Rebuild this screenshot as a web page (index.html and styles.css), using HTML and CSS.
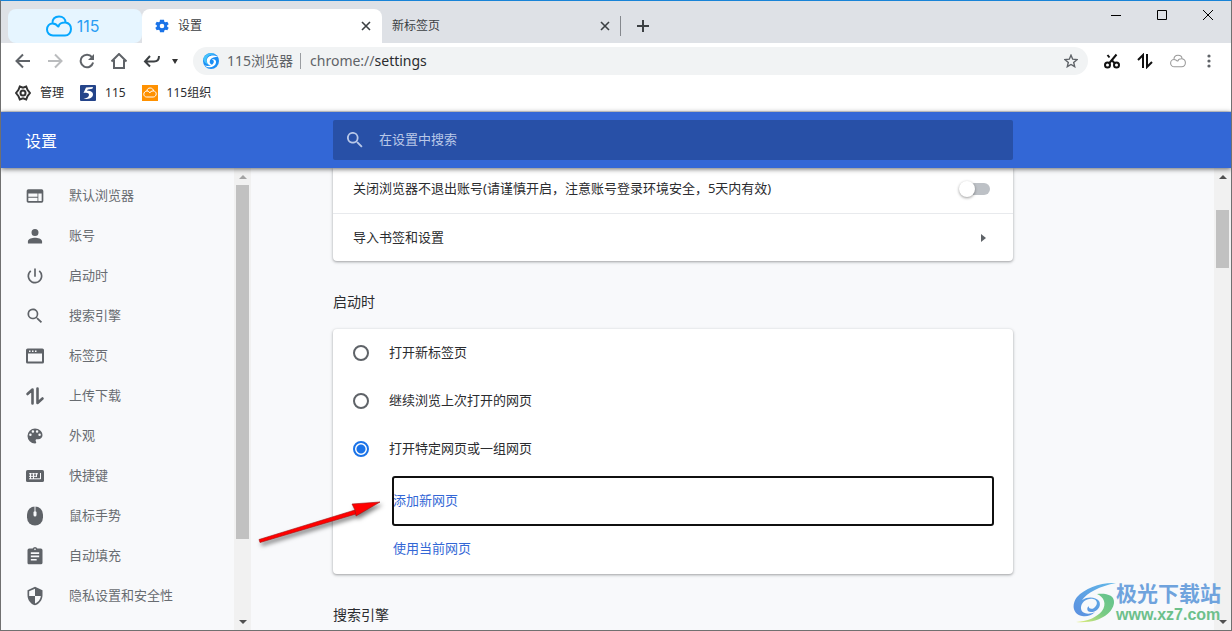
FILE: index.html
```html
<!DOCTYPE html>
<html lang="zh-CN">
<head>
<meta charset="utf-8">
<title>设置</title>
<link rel="stylesheet" href="styles.css">
</head>
<body>
<div class="window">
  <header class="tabstrip">
    <button class="home-tab" type="button">
      <svg width="26" height="22" viewBox="0 0 26 22" fill="none" stroke="#06a7ff" stroke-width="2" stroke-linecap="round"><path d="M6.500 8.500C6 4 9 1.500 13 1.500c4 0 6.500 2.500 6.500 6 3 .5 5.500 2.700 5.500 6.500 0 3.500-2.500 6.500-6 6.500H7c-3.500 0-6-2.800-6-6C1 11 3.500 8.500 6.500 8.500c2.500 0 4.500 1.500 5.500 3M12.500 11.500c.5-2.500 3.500-4.200 7-4"/></svg>
      <span>115</span>
    </button>
    <div class="tab tab-active">
      <svg width="14" height="14" viewBox="2 2 20 20" fill="#1a73e8"><path d="M19.400 13a7.500 7.500 0 0 0 0-2l2.200-1.600-2-3.600-2.600 1a7.500 7.500 0 0 0-1.700-1L14.900 3H9.100l-.4 2.800a7.500 7.500 0 0 0-1.700 1l-2.600-1-2 3.600L4.600 11a7.500 7.500 0 0 0 0 2l-2.200 1.600 2 3.600 2.600-1a7.500 7.500 0 0 0 1.700 1l.4 2.800h5.800l.4-2.800a7.500 7.500 0 0 0 1.700-1l2.600 1 2-3.600zM12 15.300a3.300 3.300 0 1 1 0-6.600 3.300 3.300 0 0 1 0 6.600z"/></svg>
      <button class="tab-title" type="button">设置</button>
      <button class="icon-btn" type="button" aria-label="关闭标签"><svg width="10" height="10" viewBox="0 0 10 10" stroke="#3c4043" stroke-width="1.600"><path d="M1 1l8 8M9 1L1 9"/></svg></button>
    </div>
    <div class="tab">
      <button class="tab-title" type="button">新标签页</button>
      <button class="icon-btn" type="button" aria-label="关闭标签"><svg width="10" height="10" viewBox="0 0 10 10" stroke="#3c4043" stroke-width="1.600"><path d="M1 1l8 8M9 1L1 9"/></svg></button>
    </div>
    <button class="icon-btn new-tab" type="button" aria-label="新建标签"><svg width="12" height="12" viewBox="0 0 12 12" stroke="#3c4043" stroke-width="2"><path d="M6 0v12M0 6h12"/></svg></button>
    <div class="window-controls">
      <button class="icon-btn" type="button" aria-label="最小化"><svg width="12" height="12" viewBox="0 0 12 12" stroke="#000"><path d="M1 6.500h10"/></svg></button>
      <button class="icon-btn" type="button" aria-label="最大化"><svg width="12" height="12" viewBox="0 0 12 12" fill="none" stroke="#000"><path d="M1.500 1.500h9v9h-9z"/></svg></button>
      <button class="icon-btn" type="button" aria-label="关闭"><svg width="12" height="12" viewBox="0 0 12 12" stroke="#000"><path d="M1 1l10 10M11 1L1 11"/></svg></button>
    </div>
  </header>

  <nav class="toolbar">
    <button class="icon-btn" type="button" aria-label="后退"><svg width="16" height="16" viewBox="0 0 16 16" fill="none" stroke="#5f6368" stroke-width="2"><path d="M15 8H2.500M8 1.500L1.500 8 8 14.500"/></svg></button>
    <button class="icon-btn" type="button" aria-label="前进"><svg width="16" height="16" viewBox="0 0 16 16" fill="none" stroke="#babcbe" stroke-width="2"><path d="M1 8h12.500M8 1.500L14.500 8 8 14.500"/></svg></button>
    <button class="icon-btn" type="button" aria-label="刷新"><svg width="16" height="16" viewBox="0 0 16 16"><path d="M13 4.200A6.300 6.300 0 1 0 14.100 9.500" fill="none" stroke="#5f6368" stroke-width="2"/><path d="M15 1v6H9z" fill="#5f6368"/></svg></button>
    <button class="icon-btn" type="button" aria-label="主页"><svg width="16" height="16" viewBox="1 1 16 16" fill="none" stroke="#5f6368" stroke-width="2"><path d="M1.500 9.500L9 2l7.500 7.500M4 8v8h10V8"/></svg></button>
    <button class="icon-btn" type="button" aria-label="恢复"><svg width="18" height="14" viewBox="0 0 18 14" fill="none" stroke="#3c4043" stroke-width="2"><path d="M7 2L2 7.500l5 5M2.500 7.500H11c3.500 0 5-2 5-5.500"/></svg></button>
    <button class="icon-btn caret" type="button" aria-label="更多恢复"><svg width="6" height="5" viewBox="0 0 6 5"><path d="M0 0h6L3 5z" fill="#333"/></svg></button>
    <div class="omnibox">
      <svg width="16" height="16" viewBox="0 0 16 16"><circle cx="8" cy="8" r="8" fill="#1c8ff5"/><path d="M.3 6C2 1 8-1.500 13 2 9 .8 4.500 2 3.500 6c-.8 3.500 2.500 6.500 6 5.500C6 12.500 1 10.500.3 6z" fill="#46c3fa"/><path d="M14.800 4C10 .8 3.500 3 3.800 8c.2 3.500 3.500 5 6 4-2.300-.5-3.500-2-3-4C7.500 5.200 11 3.800 14.800 4zM1.500 12.500c4 3.300 10.500 2 11.500-2.700.5-2.800-1.800-4.200-4.200-3.300 1.700.3 2.400 1.500 1.900 3-1 3-5 4-9.200 3z" fill="#fff"/></svg>
      <span class="omni-name">115浏览器</span>
      <label class="omni-scheme" for="url">chrome://</label>
      <input id="url" class="omni-input" type="text" value="settings">
      <button class="icon-btn" type="button" aria-label="收藏"><svg width="14" height="14" viewBox="0 0 14 14" fill="none" stroke="#5f6368" stroke-width="1.400"><path d="M7 1.200l1.700 4 4.300.4-3.300 2.800 1 4.300L7 10.500l-3.700 2.200 1-4.300L1 5.600l4.300-.4z"/></svg></button>
    </div>
    <div class="tools">
      <button class="icon-btn" type="button" aria-label="截图"><svg width="16" height="16" viewBox="0 0 16 16" fill="none" stroke="#111" stroke-width="2"><circle cx="3.500" cy="12" r="2.500"/><circle cx="12.500" cy="12" r="2.500"/><path d="M5 10.500L12.500 1.500M11 10.500L7.800 7.300M5.500 4.500L3.500 2"/></svg></button>
      <button class="icon-btn" type="button" aria-label="上传下载"><svg width="16" height="16" viewBox="0 0 16 16" fill="none" stroke="#111" stroke-width="2"><path d="M6 15V2L1 7M10 1v13l5-5"/></svg></button>
      <button class="icon-btn" type="button" aria-label="云"><svg width="16" height="14" viewBox="0 0 26 22" fill="none" stroke="#999" stroke-width="1.700"><path d="M6.500 8.500C6 4 9 1.500 13 1.500c4 0 6.500 2.500 6.500 6 3 .5 5.500 2.700 5.500 6.500 0 3.500-2.500 6.500-6 6.500H7c-3.500 0-6-2.800-6-6C1 11 3.500 8.500 6.500 8.500c2.500 0 4.500 1.500 5.500 3M12.500 11.500c.5-2.500 3.500-4.200 7-4"/></svg></button>
      <button class="icon-btn menu" type="button" aria-label="菜单"><svg width="4" height="14" viewBox="0 0 4 14" fill="#5f6368"><circle cx="2" cy="2" r="1.600"/><circle cx="2" cy="7" r="1.600"/><circle cx="2" cy="12" r="1.600"/></svg></button>
    </div>
  </nav>

  <nav class="bookmarks">
    <a href="#manage"><svg width="16" height="16" viewBox="0 0 16 16" fill="none" stroke="#333" stroke-width="2"><path d="M4.800 1.500L8 2.700l3.200-1.200L12.500 4.800 15 8l-2.500 3.200-1.300 3.300L8 13.300l-3.200 1.200-1.300-3.300L1 8l2.500-3.200z"/><circle cx="8" cy="8" r="2.500"/></svg>管理</a>
    <a href="#115"><svg width="16" height="16" viewBox="0 0 16 16"><rect width="16" height="16" rx="1" fill="#24448a"/><path d="M13 2L6 2.500 3.500 8c3-.8 5.500-.3 5.500 2 0 2-2.500 3-5.500 4 5 .5 9.500-1 9.500-4.500 0-2.800-3-4-6-3.700l.8-1.400 4.600-.6z" fill="#fff"/></svg>115</a>
    <a href="#org"><svg width="16" height="16" viewBox="0 0 16 16" fill="none"><rect width="16" height="16" fill="#ff9100"/><path d="M5 6c0-2 1.200-3 3.200-3S11.500 4.500 11.500 6c1.700.2 2.700 1.300 2.700 2.900 0 1.700-1.300 3.100-3 3.100H4.500C3 12 1.800 10.700 1.800 9.200 1.800 7.500 3.300 6 5 6c1.500 0 2.400.9 2.800 2 .3-1.200 1.500-2.100 3.700-2" stroke="#fff"/></svg>115组织</a>
  </nav>

  <header class="settings-bar">
    <h1>设置</h1>
    <div class="search">
      <svg width="16" height="16" viewBox="3 3 18 18" fill="#b9c8e8"><path d="M15.500 14h-.8l-.3-.3A6.500 6.500 0 1 0 13.700 14.400l.3.300v.8l5 5 1.500-1.500zm-6 0a4.500 4.500 0 1 1 0-9 4.500 4.500 0 0 1 0 9z"/></svg>
      <input type="search" placeholder="在设置中搜索" aria-label="在设置中搜索">
    </div>
  </header>

  <div class="body">
    <nav class="sidebar">
      <a href="#browser"><svg width="20" height="20" viewBox="0 0 24 24" fill="#5f6368"><path d="M20 4H4a2 2 0 0 0-2 2v12c0 1.100.9 2 2 2h16a2 2 0 0 0 2-2V6a2 2 0 0 0-2-2zm-5 14H4v-4h11zm0-5H4V9h11zm5 5h-4V9h4z"/></svg><span>默认浏览器</span></a>
      <a href="#account"><svg width="20" height="20" viewBox="0 0 24 24" fill="#5f6368"><path d="M12 12a4.200 4.200 0 1 0 0-8.400A4.200 4.200 0 0 0 12 12zm0 2c-3 0-8.500 1.300-8.500 4.300V21h17v-2.700c0-3-5.500-4.300-8.500-4.300z"/></svg><span>账号</span></a>
      <a href="#startup"><svg width="20" height="20" viewBox="0 0 24 24" fill="#5f6368"><path d="M13 3h-2v10h2zm4.800 2.200l-1.400 1.400a7 7 0 1 1-8.800 0L6.200 5.200A9 9 0 1 0 21 12a9 9 0 0 0-3.200-6.800z"/></svg><span>启动时</span></a>
      <a href="#engine"><svg width="20" height="20" viewBox="0 0 24 24" fill="#5f6368"><path d="M15.500 14h-.8l-.3-.3A6.500 6.500 0 1 0 13.700 14.400l.3.300v.8l5 5 1.500-1.500zm-6 0a4.500 4.500 0 1 1 0-9 4.500 4.500 0 0 1 0 9z"/></svg><span>搜索引擎</span></a>
      <a href="#tabs"><svg width="20" height="20" viewBox="0 0 20 20"><rect x="2" y="3.500" width="16" height="13" rx=".6" fill="none" stroke="#5f6368" stroke-width="2"/><path d="M2 3h16v4.500H2z" fill="#5f6368"/><path d="M4 4.500h1.500V6H4zM7 4.500h1.500V6H7zM10 4.500h1.500V6H10z" fill="#f8f9fb"/></svg><span>标签页</span></a>
      <a href="#transfer"><svg width="20" height="20" viewBox="0 0 20 20" fill="none" stroke="#5f6368" stroke-width="2.600" stroke-linecap="round" stroke-linejoin="round"><path d="M7.500 17.500V3.500L2.500 8M12.500 2.500v14.500l5-4.500"/></svg><span>上传下载</span></a>
      <a href="#look"><svg width="20" height="20" viewBox="0 0 24 24" fill="#5f6368"><path d="M12 3a9 9 0 0 0 0 18c.8 0 1.500-.7 1.500-1.500 0-.4-.2-.7-.4-1-.2-.3-.4-.6-.4-1 0-.8.700-1.500 1.500-1.500H16a5 5 0 0 0 5-5c0-4.400-4-8-9-8zm-5.500 9a1.500 1.500 0 1 1 0-3 1.500 1.500 0 0 1 0 3zm3-4a1.500 1.500 0 1 1 0-3 1.500 1.500 0 0 1 0 3zm5 0a1.500 1.500 0 1 1 0-3 1.500 1.500 0 0 1 0 3zm3 4a1.500 1.500 0 1 1 0-3 1.500 1.500 0 0 1 0 3z"/></svg><span>外观</span></a>
      <a href="#keys"><svg width="20" height="20" viewBox="0 0 20 20"><rect x="1" y="4" width="18" height="12" rx="1.600" fill="#5f6368"/><path d="M4 7.800h9M4 10.300h7M4 12.800h11.500M15.500 7v6M5.500 7v6M8.500 7v6M11.500 7v4" stroke="#f8f9fb"/></svg><span>快捷键</span></a>
      <a href="#mouse"><svg width="20" height="20" viewBox="0 0 20 20"><rect x="2" y=".5" width="16" height="19" rx="8" fill="#5f6368"/><path d="M10 0v5" stroke="#f8f9fb"/><rect x="8.500" y="5" width="3" height="5.500" rx="1.500" fill="#f8f9fb"/></svg><span>鼠标手势</span></a>
      <a href="#autofill"><svg width="20" height="20" viewBox="0 0 24 24" fill="#5f6368"><path d="M19 3h-4.200a3 3 0 0 0-5.600 0H5a2 2 0 0 0-2 2v15c0 1.100.9 2 2 2h14a2 2 0 0 0 2-2V5a2 2 0 0 0-2-2zm-7 0a1 1 0 1 1 0 2 1 1 0 0 1 0-2zm2 14.500H7v-2h7zm3-4H7v-2h10zm0-4H7v-2h10z"/></svg><span>自动填充</span></a>
      <a href="#privacy"><svg width="20" height="20" viewBox="0 0 24 24" fill="#5f6368"><path d="M12 1L3 5v6c0 5.500 3.800 10.700 9 12 5.200-1.300 9-6.500 9-12V5zm0 11h7c-.5 4.100-3.300 7.800-7 8.900V12H5V6.300l7-3.100z"/></svg><span>隐私设置和安全性</span></a>
    </nav>
    <div class="scrollbar side-scroll" aria-hidden="true"><i class="up"></i><b></b><i class="down"></i></div>

    <main class="content">
      <section class="card card-top">
        <label class="row row-toggle"><span>关闭浏览器不退出账号(请谨慎开启，注意账号登录环境安全，5天内有效)</span><input class="switch" type="checkbox"></label>
        <button class="row row-link" type="button"><span>导入书签和设置</span><svg width="5" height="8" viewBox="0 0 5 8" fill="#5f6368"><path d="M0 0l5 4-5 4z"/></svg></button>
      </section>
      <h2>启动时</h2>
      <section class="card startup">
        <label class="radio-row"><input type="radio" name="startup"><span>打开新标签页</span></label>
        <label class="radio-row"><input type="radio" name="startup"><span>继续浏览上次打开的网页</span></label>
        <label class="radio-row"><input type="radio" name="startup" checked><span>打开特定网页或一组网页</span></label>
        <div class="pages">
          <button class="page-link focused" type="button"><span>添加新网页</span></button>
          <button class="page-link" type="button"><span>使用当前网页</span></button>
        </div>
      </section>
      <h2>搜索引擎</h2>
      <svg class="arrow" width="140" height="60" viewBox="0 0 140 60"><g fill="#f00" stroke="#a01010" stroke-width=".6"><path d="M8 47.500L104 18l1 4-96 28.500z"/><path d="M101 12l28-2-24 14-1-6z"/></g></svg>
    </main>
    <div class="scrollbar page-scroll" aria-hidden="true"><i class="up"></i><b></b><i class="down"></i></div>
  </div>

  <div class="watermark">
    <svg width="43" height="42" viewBox="0 0 43 42"><defs><linearGradient id="wb" x1="0" y1="1" x2="1" y2="0"><stop offset="0" stop-color="#5b8fe0"/><stop offset="1" stop-color="#62b8e8"/></linearGradient><linearGradient id="wg" x1="0" y1="1" x2="1" y2="0"><stop offset="0" stop-color="#e6ee7a"/><stop offset=".5" stop-color="#79cb84"/><stop offset="1" stop-color="#62c28f"/></linearGradient></defs><path d="M43 1C28 0 12 6 4 15c-6 8-4 17 5 19 4 1 9 0 13-4-6 3-14 2-14-4 0-6 6-10 12-9 5 1 5 6 1 9-3 2-6 0-5-2-3 2-2 6 2 6 6 0 11-6 8-11-3-4-11-5-17-1C14 11 27 4 43 1z" fill="url(#wb)"/><path d="M24 12c9-1 18 1 17 9-1 9-13 21-38 19 13-1 21-5 26-11 5-7 2-14-5-17z" fill="url(#wg)"/></svg>
    <div><p class="wm-name">极光下载站</p><p class="wm-url">www.xz7.com</p></div>
  </div>
</div>
</body>
</html>
```
FILE: styles.css
```css
* { box-sizing: border-box; }
body, h1, h2, p { margin: 0; }
body {
  font: 13px/20px "Noto Sans", "Noto Sans CJK SC", sans-serif;
  color: #2b2c2f;
}
button, input { font: inherit; color: inherit; }
button { border: 0; padding: 0; background: none; }
a { color: inherit; text-decoration: none; }
svg { display: block; flex: none; }
h1, h2 { font-weight: inherit; }

.window {
  position: relative;
  display: flex;
  flex-direction: column;
  height: 100vh;
  overflow: hidden;
  border: 1px solid #707070;
  border-top-color: #1883d7;
  background: #fff;
}
.icon-btn { display: flex; align-items: center; justify-content: center; flex: none; }

.tabstrip {
  display: flex;
  align-items: stretch;
  flex: none;
  height: 42px;
  padding: 8px 0 0 7px;
  background: #dee1e6;
  font-size: 12px;
}
.home-tab {
  display: flex;
  align-items: center;
  justify-content: center;
  gap: 5px;
  width: 134px;
  padding-right: 5px;
  border-radius: 8px;
  background: #e6f5ff;
  color: #2a9df4;
  font: 16px/20px Inter, sans-serif;
}
.tab { display: flex; align-items: center; gap: 9px; width: 238px; padding: 0 10px; }
.tab-active { width: 240px; padding: 0 11px 0 13px; border-radius: 8px 8px 0 0; background: #fff; }
.tab-title { flex: 1; text-align: left; color: #3c4043; }
.new-tab { align-self: center; height: 20px; padding: 0 16px; border-left: 1px solid #85888d; }
.window-controls { display: flex; align-items: flex-start; gap: 34px; margin-left: auto; padding-right: 17px; }

.toolbar { display: flex; align-items: center; flex: none; height: 36px; padding: 0 20px 0 14px; gap: 16px; }
.caret { margin: 0 -1px 0 -5px; }
.omnibox {
  display: flex;
  align-items: center;
  flex: 1;
  height: 28px;
  padding: 0 10px;
  border-radius: 14px;
  background: #f1f3f4;
  font-size: 14px;
}
.omni-name { margin-left: 8px; padding-right: 7px; border-right: 1px solid #9a9da1; line-height: 16px; color: #5f6368; }
.omni-scheme { margin-left: 9px; color: #5f6368; }
.omni-input { flex: 1; min-width: 0; padding: 0; border: 0; outline: 0; background: none; }
.tools { display: flex; align-items: center; gap: 17px; }
.menu { margin-left: 4px; }

.bookmarks {
  display: flex;
  align-items: center;
  flex: none;
  gap: 16px;
  height: 33px;
  padding: 0 14px 5px;
  border-bottom: 1px solid #dadce0;
  font-size: 12px;
}
.bookmarks a { display: flex; align-items: center; gap: 9px; }

.settings-bar {
  position: relative;
  z-index: 1;
  display: flex;
  align-items: center;
  flex: none;
  height: 56px;
  background: #3367d6;
  box-shadow: 0 1px 5px rgba(0, 0, 0, .6);
}
.settings-bar h1 { width: 332px; padding: 2px 0 0 24px; font-size: 16px; color: #fff; }
.search {
  display: flex;
  align-items: center;
  flex: 0 1 680px;
  gap: 16px;
  height: 40px;
  padding: 0 14px;
  border-radius: 2px;
  background: #2850a7;
}
.search input { flex: 1; min-width: 0; padding: 0 0 2px; border: 0; outline: 0; background: none; color: #fff; }
.search input::placeholder { color: #b9c8e8; }

.body { display: flex; flex: 1; min-height: 0; background: #f8f9fb; }
.sidebar { width: 233px; flex: none; padding-top: 8px; overflow: hidden; color: #686c71; }
.sidebar a { display: flex; align-items: center; gap: 24px; height: 40px; padding-left: 24px; }
.sidebar span, .row span, .radio-row span { padding-bottom: 2px; }

.scrollbar { display: flex; flex-direction: column; align-items: center; flex: none; width: 17px; background: #f1f1f1; }
.scrollbar b { width: 13px; background: #c1c1c1; }
.scrollbar i { height: 17px; display: flex; align-items: center; }
.scrollbar i::before { content: ""; border: solid transparent; border-width: 0 4px; }
.scrollbar .up::before { border-bottom: 4px solid #505050; }
.scrollbar .down { margin-top: auto; }
.scrollbar .down::before { border-top: 4px solid #505050; }
.side-scroll .up::before { border-bottom-color: #a3a3a3; }
.side-scroll b { height: 354px; }
.page-scroll b { height: 58px; margin-top: 25px; }

.content { position: relative; flex: 1; min-width: 0; overflow: hidden; padding: 0 20px 0 82px; }
.card {
  max-width: 680px;
  border-radius: 4px;
  background: #fff;
  box-shadow: 0 1px 2px rgba(60, 64, 67, .3), 0 1px 3px 1px rgba(60, 64, 67, .15);
}
.card-top { border-radius: 0 0 4px 4px; }
.row { display: flex; align-items: center; justify-content: space-between; width: 100%; padding: 0 23px 0 20px; }
.row-toggle { height: 45px; padding-bottom: 4px; }
.row-link { height: 48px; padding-right: 27px; border-top: 1px solid #e8eaed; }
.switch {
  appearance: none;
  position: relative;
  width: 28px;
  height: 12px;
  margin: 0;
  border-radius: 6px;
  background: #bdc1c6;
}
.switch::before {
  content: "";
  position: absolute;
  left: -3px;
  top: -2px;
  width: 16px;
  height: 16px;
  border-radius: 8px;
  background: #fff;
  box-shadow: 0 1px 3px rgba(0, 0, 0, .4);
}
h2 { padding: 31px 0 17px; font-size: 14px; line-height: 20px; }
.startup { padding: 0 20px 1px; }
.radio-row { display: flex; align-items: center; gap: 20px; height: 48px; }
.radio-row input {
  appearance: none;
  width: 16px;
  height: 16px;
  margin: 0;
  border: 2px solid #5f6368;
  border-radius: 8px;
}
.radio-row input:checked { border-color: #1a73e8; background: radial-gradient(circle, #1a73e8 4px, transparent 5px); }
.pages { display: flex; flex-direction: column; padding: 4px 0 0 40px; }
.page-link { height: 48px; padding-bottom: 2px; text-align: left; color: #3367d6; }
.focused { border-radius: 2px; outline: 2px solid #101010; outline-offset: -1px; }
.arrow { position: absolute; left: 0; top: 324px; filter: drop-shadow(2px 3px 2px rgba(0, 0, 0, .5)); }

.watermark { position: absolute; right: 10px; bottom: 6px; display: flex; align-items: center; }
.wm-name { font: 700 21px/24px "Liberation Sans", "Noto Sans CJK SC", sans-serif; color: #6fa3dd; }
.wm-url { font: 700 16px/18px "Liberation Sans", sans-serif; color: #6cc08b; }
```
